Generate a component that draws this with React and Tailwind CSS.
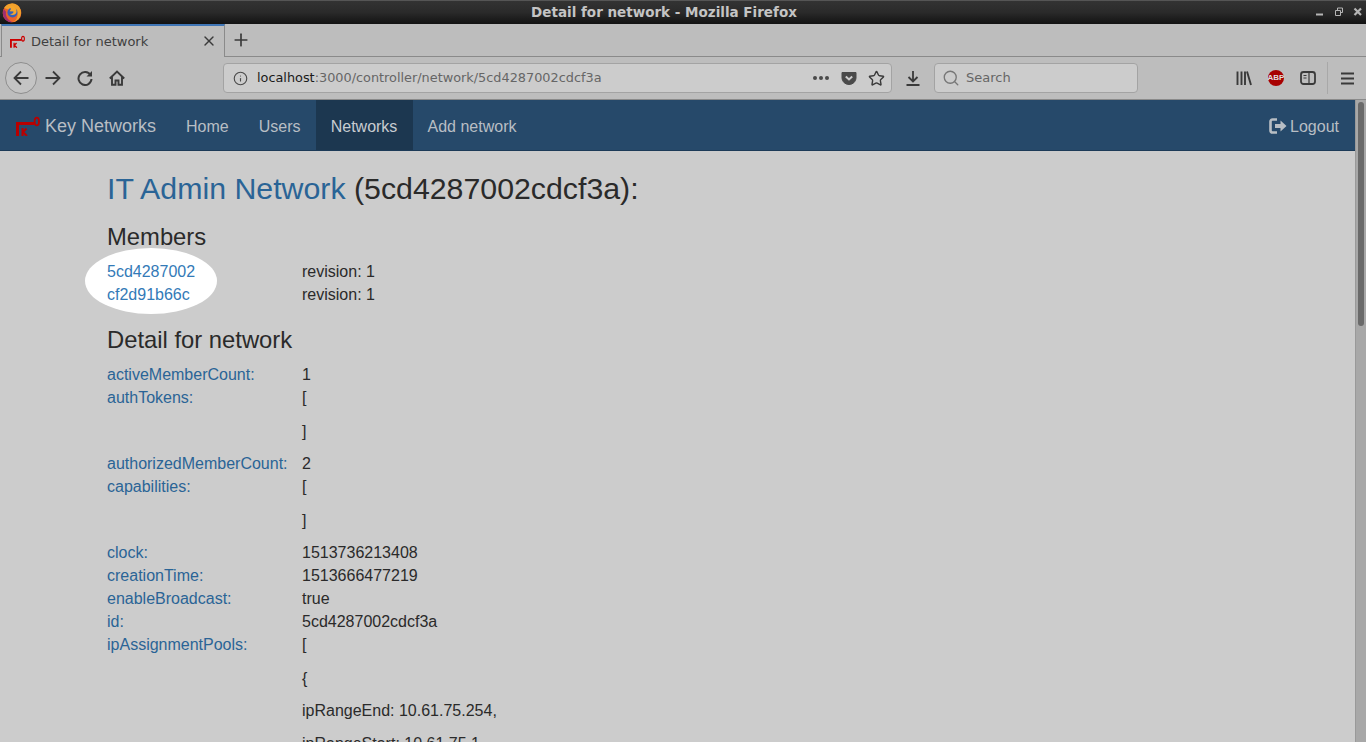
import React from 'react';
import { Info, Search, Star, X, Plus } from 'lucide-react';

const KeyLogo = ({ className, color = '#b80000' }) => (
  <svg className={className} viewBox="0 0 24 20" fill="none" stroke={color}>
    <path d="M0 7.500H18.500" strokeWidth="3" />
    <ellipse cx="20.800" cy="5.500" rx="2.200" ry="3.800" strokeWidth="1.800" />
    <path d="M1.500 6V20" strokeWidth="3" />
    <path d="M6.500 12V20M6.500 16.500L10.500 12.500M6.500 15.500L11 20" strokeWidth="2" />
  </svg>
);

const FirefoxLogo = () => (
  <svg width="20" height="20" viewBox="0 0 20 20" className="block">
    <circle cx="10" cy="10" r="9.300" fill="#e8622a" />
    <path d="M2 5a9.300 9.300 0 0 1 15-1.500c3 4 2.500 9-.5 12.500a9.300 9.300 0 0 1-6 3.200 8 8 0 0 0 5-8c-.5-3-3.500-5-7-4z" fill="#f2a12b" />
    <circle cx="10.500" cy="9.500" r="5" fill="#3560b8" />
    <path d="M7 3.500c4-1.500 8 1 7.500 5.500-.5 3-4.500 4-6.500 2 2.500.3 3.500-1.200 3.500-2.500L7.500 8.200 9 6z" fill="#f5a62c" />
    <path d="M1.800 6c-1.800 4-.8 9 3 11.800 2 1.300 4 1.700 5.700 1.400-4-1.500-7.500-6-6.500-10.500z" fill="#a22f72" />
  </svg>
);

const Row = ({ label, children }) => (
  <div className="flex">
    <div className="w-[195px] shrink-0 text-[#2a6496]">{label}</div>
    <div className="min-w-0">{children}</div>
  </div>
);

const App = () => {
  return (
    <div className="h-screen overflow-hidden flex flex-col bg-[#cccccc] font-['Liberation_Sans',sans-serif]">
      {/* window title bar */}
      <div className="h-[24px] shrink-0 relative flex items-center justify-center pr-[38px] bg-gradient-to-b from-[#333333] via-[#2a2a2a] to-[#131313] border-t border-[#555555] font-['DejaVu_Sans',sans-serif] text-[13.5px] font-bold text-[#c4c4c4]">
        <div className="absolute left-[2px] top-[2px]"><FirefoxLogo /></div>
        Detail for network - Mozilla Firefox
        <div className="absolute right-[3px] top-[6px] flex items-center gap-[9px] text-[#b5b5b5]">
          <svg width="10" height="10" viewBox="0 0 10 10"><path d="M1 7.500h7" stroke="currentColor" strokeWidth="2" /></svg>
          <svg width="10" height="10" viewBox="0 0 10 10" fill="none" stroke="currentColor"><path d="M3.500 3V1h5v4.500h-2M1.500 3.500h5v5h-5z" /></svg>
          <svg width="10" height="10" viewBox="0 0 10 10"><path d="M1.500 1.500l6.500 6.500M8 1.500L1.500 8" stroke="currentColor" strokeWidth="2.200" /></svg>
        </div>
      </div>

      {/* tab strip */}
      <div className="h-[33px] shrink-0 flex bg-[#bdbdbd] border-b border-[#8a8a8a] font-['DejaVu_Sans',sans-serif] text-[#3a3a3a]">
        <div className="w-[224px] h-[33px] ml-[1px] flex items-center bg-[#bdbdbd] border-t-2 border-[#3f75b5] border-r border-l border-r-[#8a8a8a] border-l-[#8a8a8a] relative">
          <KeyLogo className="w-[15px] h-[13px] ml-[8px]" color="#cc0000" />
          <span className="ml-[6px] text-[13px] text-[#3f3f3f]">Detail for network</span>
          <X className="absolute right-[7px] top-[7px] w-[16px] h-[16px]" strokeWidth={2} />
        </div>
        <div className="w-[32px] flex items-center justify-center">
          <Plus className="w-[20px] h-[20px]" strokeWidth={2} />
        </div>
      </div>

      {/* toolbar */}
      <div className="h-[43px] shrink-0 flex items-center bg-[#bdbdbd] border-b border-[#8a8a8a] text-[#3a3a3a] font-['DejaVu_Sans',sans-serif] relative">
        <div className="ml-[5px] w-[32px] h-[32px] rounded-full border border-[#8e8e8e] bg-[#c4c4c4] flex items-center justify-center">
          <svg width="16" height="16" viewBox="0 0 16 16" fill="none" stroke="currentColor" strokeWidth="1.800"><path d="M15.500 8H1.500M8 1.500L1.500 8 8 14.500" /></svg>
        </div>
        <svg className="ml-[8px]" width="16" height="16" viewBox="0 0 16 16" fill="none" stroke="currentColor" strokeWidth="1.800"><path d="M.5 8h14M8 1.500L14.500 8 8 14.500" /></svg>
        <svg className="ml-[16px]" width="16" height="16" viewBox="0 0 16 16" fill="none" stroke="currentColor" strokeWidth="2"><path d="M13.500 5A6.500 6.500 0 1 0 14.500 9" /><path d="M15 1v5.500H9.500" fill="currentColor" stroke="none" /></svg>
        <svg className="ml-[16px]" width="16" height="16" viewBox="0 0 16 16" fill="none" stroke="currentColor" strokeWidth="1.900">
          <path d="M.8 8.500L8 1.500l7.200 7M3 7v7.800h3.500V10.500h3v4.300H13V7" />
        </svg>
        <div className="ml-[98px] w-[669px] h-[30px] flex items-center rounded-[4px] border border-[#a3a3a3] bg-[#cccccc] text-[12.85px]">
          <Info className="ml-[9px] w-[15px] h-[15px] text-[#4a4a4a]" strokeWidth={1.800} />
          <span className="ml-[9px] text-[#1a1a1a]">localhost</span>
          <span className="text-[#666666]">:3000/controller/network/5cd4287002cdcf3a</span>
          <div className="ml-auto flex items-center">
            <div className="flex gap-[2px] mr-[12px]">
              <span className="w-[4px] h-[4px] rounded-full bg-[#4a4a4a]"></span>
              <span className="w-[4px] h-[4px] rounded-full bg-[#4a4a4a]"></span>
              <span className="w-[4px] h-[4px] rounded-full bg-[#4a4a4a]"></span>
            </div>
            <svg width="16" height="16" viewBox="0 0 16 16" className="mr-[11px]">
              <path d="M1 2.500h14v5.500a7 6.500 0 0 1-14 0z" fill="#4a4a4a" stroke="#4a4a4a" strokeLinejoin="round" />
              <path d="M4.800 6.500L8 9.500l3.200-3" fill="none" stroke="#cccccc" strokeWidth="2" />
            </svg>
            <Star className="mr-[6px] w-[17px] h-[17px]" strokeWidth={2} />
          </div>
        </div>
        <svg className="ml-[13px]" width="16" height="16" viewBox="0 0 16 16" fill="none" stroke="currentColor" strokeWidth="1.800">
          <path d="M8 1v10M3.500 7L8 11.500 12.500 7M1.500 15h13" />
        </svg>
        <div className="ml-[13px] w-[204px] h-[30px] flex items-center rounded-[4px] border border-[#a3a3a3] bg-[#cccccc] text-[13px] text-[#666666]">
          <Search className="ml-[7px] w-[18px] h-[18px] text-[#777777]" strokeWidth={1.800} />
          <span className="ml-[6px]">Search</span>
        </div>
        <div className="ml-auto flex items-center">
          <svg width="16" height="16" viewBox="0 0 16 16" fill="none" stroke="#3a3a3a" strokeWidth="1.900" className="mr-[16px]">
            <path d="M1.500 1.500v13.500M5.500 1.500v13.500M9 1.500v13.500M11 1.500l4 13.500" />
          </svg>
          <div className="w-[16px] h-[16px] mr-[16px] flex items-center justify-center rounded-full bg-[#a80000] text-[8px] font-bold text-[#dddddd] font-['Liberation_Sans',sans-serif]">ABP</div>
          <svg width="16" height="16" viewBox="0 0 16 16" fill="none" stroke="#3a3a3a" strokeWidth="1.800" className="mr-[11px]">
            <rect x="1" y="2" width="14" height="12" rx="2.500" />
            <path d="M9 2v12M3.500 5.500h3M3.500 8h3" strokeWidth="1.200" />
          </svg>
          <div className="h-[32px] border-l border-[#a8a8a8]"></div>
          <svg className="ml-[13px] mr-[12px]" width="13" height="13" viewBox="0 0 13 13" stroke="#3a3a3a" strokeWidth="2"><path d="M0 1.500h13M0 6.500h13M0 11.500h13" /></svg>
        </div>
      </div>

      {/* page */}
      <div className="flex-1 min-h-0 flex">
        <div className="flex-1 min-w-0 overflow-hidden text-[16px] leading-[23px] text-[#2a2a2a]">
          <nav className="h-[51px] pt-[2px] flex bg-[#26496a] border-b border-[#1c3a57] text-[#b8bec4]">
            <div className="flex items-center pl-[16px]">
              <KeyLogo className="w-[24px] h-[20px]" />
              <span className="ml-[5px] text-[18px]">Key Networks</span>
            </div>
            <div className="ml-[15px] px-[15px] flex items-center">Home</div>
            <div className="px-[15px] flex items-center">Users</div>
            <div className="-mt-[2px] pt-[2px] w-[97px] flex items-center justify-center bg-[#1c3750] text-[#c8ccd0]">Networks</div>
            <div className="px-[15px] flex items-center">Add network</div>
            <div className="ml-auto pr-[16px] flex items-center">
              <svg width="18" height="18" viewBox="0 0 18 18" className="mr-[3px]" fill="none" stroke="currentColor">
                <path d="M8 2.500H3.500A2 2 0 0 0 1.500 4.500v9a2 2 0 0 0 2 2H8" strokeWidth="2.600" />
                <path d="M6 7h5.500V3.500L17.500 9l-6 5.500V11H6z" fill="currentColor" stroke="none" />
              </svg>
              Logout
            </div>
          </nav>

          <div className="relative pl-[107px]">
            <div className="absolute left-[85px] top-[97px] w-[132px] h-[66px] rounded-[50%] bg-white"></div>
            <h1 className="pt-[21px] pb-[10px] text-[30.3px] leading-[33px]">
              <span className="text-[#2a6496]">IT Admin Network</span> (5cd4287002cdcf3a):
            </h1>
            <h2 className="mt-[9px] mb-[10px] text-[23.8px] leading-[26px]">Members</h2>
            <div className="relative">
              <Row label={<span className="text-[#337ab7]">5cd4287002</span>}>revision: 1</Row>
              <Row label={<span className="text-[#337ab7]">cf2d91b66c</span>}>revision: 1</Row>
            </div>
            <h2 className="mt-[21px] mb-[10px] text-[23.8px] leading-[26px]">Detail for network</h2>
            <Row label="activeMemberCount:">1</Row>
            <Row label="authTokens:">
              <p className="mb-[11px]">[</p>
              <p className="mb-[9px]">]</p>
            </Row>
            <Row label="authorizedMemberCount:">2</Row>
            <Row label="capabilities:">
              <p className="mb-[11px]">[</p>
              <p className="mb-[9px]">]</p>
            </Row>
            <Row label="clock:">1513736213408</Row>
            <Row label="creationTime:">1513666477219</Row>
            <Row label="enableBroadcast:">true</Row>
            <Row label="id:">5cd4287002cdcf3a</Row>
            <Row label="ipAssignmentPools:">
              <p className="mb-[11px]">[</p>
              <p className="mb-[9px]">{'{'}</p>
              <p className="mb-[10px]">ipRangeEnd: 10.61.75.254,</p>
              <p className="mb-[10px]">ipRangeStart: 10.61.75.1</p>
            </Row>
          </div>
        </div>

        {/* scrollbar */}
        <div className="w-[11px] shrink-0 bg-[#a8a8a8] border-l border-[#999999] flex justify-center pt-[2px]">
          <div className="w-[6px] h-[224px] rounded-full bg-[#6a6a6a]"></div>
        </div>
      </div>
    </div>
  );
};

export default App;
